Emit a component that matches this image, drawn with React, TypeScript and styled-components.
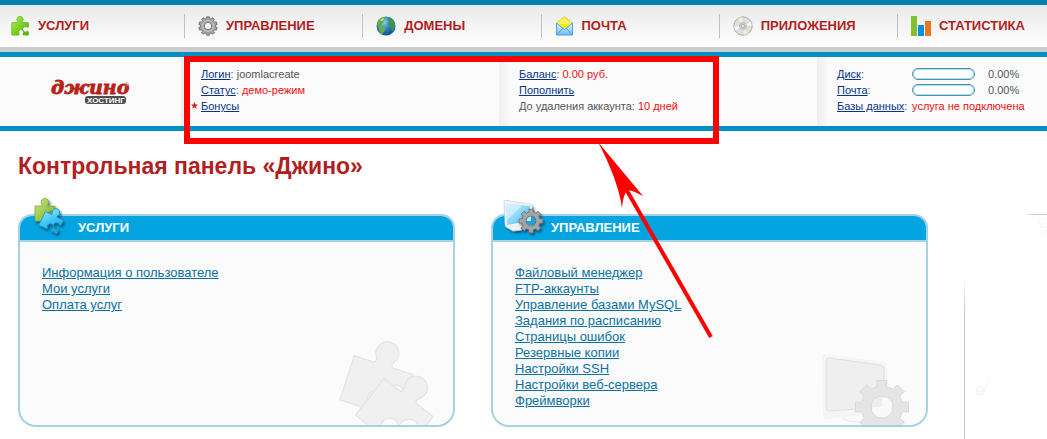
import React from "react";
import styled, { createGlobalStyle } from "styled-components";

const GlobalStyle = createGlobalStyle`
  * { box-sizing: border-box; }
  body {
    margin: 0;
    background: #fff;
    color: #555;
    font-family: "Liberation Sans", Arial, sans-serif;
    font-size: 11px;
    line-height: 16px;
  }
`;

const Page = styled.div`
  position: relative;
  overflow: hidden;
`;

const NavBar = styled.nav`
  display: grid;
  grid-template-columns: 184px repeat(4, 1fr) 150px;
  align-items: center;
  height: 52px;
  border-top: 5px solid #0280ae;
  border-bottom: 5px solid #cbcccf;
  background: linear-gradient(#ebeaeb, #fff);
`;

const NavLink = styled.a<{ $first?: boolean }>`
  display: flex;
  align-items: center;
  gap: 8px;
  height: 24px;
  padding-left: ${(p) => (p.$first ? 11 : 13)}px;
  border-left: ${(p) => (p.$first ? "0" : "1px solid #c0c0c2")};
  color: #b11f22;
  font-family: "Liberation Sans", Arial, sans-serif;
  font-size: 13px;
  font-weight: 700;
  text-decoration: none;
  white-space: nowrap;
`;

const StatusBar = styled.header`
  position: relative;
  z-index: 1;
  display: grid;
  grid-template-columns: 181px 1fr 1fr 230px;
  border-top: 5px solid #0290c4;
  border-bottom: 5px solid #0290c4;
  background: #fbfbfb;
`;

const LogoCell = styled.div`
  display: flex;
  align-items: center;
  padding-left: 48px;
`;

const InfoCell = styled.div`
  padding: 9px 0 12px 20px;
  background: linear-gradient(90deg, #eeeeef, #fbfbfb 12px);
  white-space: nowrap;
`;

const InfoLine = styled.div`
  position: relative;
`;

const InfoLink = styled.a`
  color: #05328c;
  text-decoration: underline;
`;

const Red = styled.span`
  color: #f30d14;
`;

const Star = styled.svg`
  position: absolute;
  left: -10px;
  top: 4px;
`;

const Usage = styled.div`
  display: grid;
  grid-template-columns: 75px 76px auto;
  justify-content: start;
  align-items: center;
`;

const WideValue = styled(Red)`
  grid-column: 2 / 4;
`;

const Meter = styled.div`
  width: 63px;
  height: 12px;
  border: 1px solid #3594b5;
  border-radius: 6px;
  background: #fff;
  box-shadow: inset 0 0 1px 1px #b5d9e6;
`;

const Main = styled.main`
  padding: 21px 0 12px 18px;
`;

const Title = styled.h1`
  margin: 0 0 34px;
  color: #b11f22;
  font-size: 23px;
  line-height: 28px;
`;

const Columns = styled.div`
  display: grid;
  grid-template-columns: 1fr 1fr 83px;
  gap: 36px;
`;

const Panel = styled.section`
  position: relative;
  border: 2px solid #a6d2e4;
  border-radius: 14px 14px 18px 18px;
  background: #fbfbfb;
`;

const PanelTitle = styled.h2`
  margin: 0;
  padding-left: 58px;
  border-bottom: 2px solid #a6d2e4;
  border-radius: 12px 12px 0 0;
  background: #04a4e1;
  color: #fff;
  font-size: 13px;
  font-weight: 700;
  line-height: 24px;
`;

const PanelIcon = styled.svg`
  position: absolute;
  left: 10px;
  top: -20px;
  overflow: visible;
`;

const Watermark = styled.svg`
  position: absolute;
  right: 12px;
  bottom: 0;
`;

const LinkList = styled.ul`
  position: relative;
  margin: 0;
  padding: 23px 22px 16px;
  list-style: none;
  font-size: 13px;
`;

const ListLink = styled.a`
  color: #0a71a2;
  text-decoration: underline;
`;

const Side = styled.aside`
  position: relative;
`;

const SideArt = styled.svg`
  position: absolute;
  left: 0;
  top: 0;
`;

const Highlight = styled.div`
  position: absolute;
  left: 184px;
  right: 328px;
  top: -1px;
  height: 88px;
  border: 6px solid #f00;
`;

const Arrow = styled.svg`
  position: absolute;
  right: 333px;
  top: 84px;
  pointer-events: none;
`;

const PIECE =
  "M1 8h6.500c1-.2.8-1.200.3-2A3.700 3.700 0 1 1 14 6c-.5.8-.7 1.800.3 2H21v5c-.3 1-1.200.9-2 .3a3.200 3.200 0 1 0 0 5.400c.8-.5 1.700-.6 2 .4V23h-6c-1-.3-.8-1.200-.3-2a3 3 0 1 0-5 0c.5.8.6 1.700-.3 2H1z";

function gearPath(cx: number, cy: number, r: number, inner: number, teeth = 8) {
  const pts: string[] = [];
  const step = (Math.PI * 2) / teeth;
  for (let i = 0; i < teeth; i++) {
    const a = i * step - Math.PI / 2;
    [
      [-0.28, inner],
      [-0.24, r],
      [0.24, r],
      [0.28, inner],
    ].forEach(([o, d]) => {
      const t = a + o * step;
      pts.push(`${(cx + d * Math.cos(t)).toFixed(2)} ${(cy + d * Math.sin(t)).toFixed(2)}`);
    });
  }
  return `M${pts.join("L")}Z`;
}

const PieceIcon = () => (
  <svg width="19" height="20" viewBox="0 0 23 24" aria-hidden="true">
    <defs>
      <linearGradient id="green" x1="0" x2="1" y2="1">
        <stop offset="0" stopColor="#b8ee70" />
        <stop offset=".5" stopColor="#7bd322" />
        <stop offset="1" stopColor="#55ad12" />
      </linearGradient>
    </defs>
    <path d={PIECE} fill="url(#green)" stroke="#69b52c" />
  </svg>
);

const GearIcon = () => (
  <svg width="20" height="20" viewBox="0 0 20 20" aria-hidden="true">
    <path d={gearPath(10, 10, 9.3, 7.6, 10)} fill="#a6a6a6" stroke="#737373" strokeLinejoin="round" />
    <circle cx="10" cy="10" r="5.600" fill="none" stroke="#c5c5c5" />
    <circle cx="10" cy="10" r="3.700" fill="#f4f4f4" stroke="#777" />
  </svg>
);

const GlobeIcon = () => (
  <svg width="20" height="20" viewBox="0 0 20 20" aria-hidden="true">
    <defs>
      <radialGradient id="sea" cx=".4" cy=".3" r=".7">
        <stop offset="0" stopColor="#8fd0f2" />
        <stop offset=".5" stopColor="#2f86c8" />
        <stop offset="1" stopColor="#124f92" />
      </radialGradient>
    </defs>
    <circle cx="10" cy="10" r="9.500" fill="url(#sea)" />
    <path d="M1 7C2 4 4 2 7 1l3 .5-1 2-2 .5 1 2-2 1.500-1 2 2 1 2.500 1-.5 3-2 2.500-1 1.500C3 16 3 13 2.500 11z" fill="#64ad48" />
    <path d="M11.500 3l3-1.500C17 3 18.500 5 19 8l-.5 4-1.500 3-1.500-1-.5-3-2.500-1-1-2.500 1.500-1.500z" fill="#3c9352" />
    <path d="M4 4l3-2 1 1-2 2z" fill="#c7e8a5" />
  </svg>
);

const MailIcon = () => (
  <svg width="19" height="20" viewBox="0 0 19 20" aria-hidden="true">
    <defs>
      <linearGradient id="mail" x2="0" y2="1">
        <stop offset="0" stopColor="#eaf8ff" />
        <stop offset="1" stopColor="#68bdf0" />
      </linearGradient>
    </defs>
    <path d="M1.500 7L9.500.8 17.500 7v11.500h-16z" fill="#fff45b" stroke="#dfca25" />
    <path d="M1.500 7l8 6.500 8-6.500v12h-16z" fill="url(#mail)" stroke="#4aa4dc" />
    <path d="M1.500 19l6.500-7M17.500 19L11 12" stroke="#4aa4dc" />
    <path d="M4 8h11l-5.500 4z" fill="#ffe600" />
  </svg>
);

const DiscIcon = () => (
  <svg width="20" height="20" viewBox="0 0 20 20" aria-hidden="true">
    <circle cx="10" cy="10" r="9.200" fill="#dedede" stroke="#aaa" />
    <path d="M10 10L5 2.500l4-1.500zM10 10l5 7.500-4 1.500z" fill="#f2f1c8" />
    <path d="M10 10l8-4.500.8 4zM10 10l-8 4.500-.8-4z" fill="#f8f8f8" />
    <circle cx="10" cy="10" r="3.500" fill="#d0d0d0" stroke="#bbb" />
    <circle cx="10" cy="10" r="1.500" fill="#fff" stroke="#aaa" />
  </svg>
);

const ChartIcon = () => (
  <svg width="20" height="20" viewBox="0 0 20 20" aria-hidden="true">
    <path d="M0 0h6v20H0z" fill="#82c12b" />
    <path d="M7 9h6v11H7z" fill="#0a90df" />
    <path d="M14 5h6v15h-6z" fill="#e8781e" />
  </svg>
);

const Logo = () => (
  <svg width="86" height="34" viewBox="0 0 86 34" role="img" aria-label="джино хостинг">
    <text
      x="3"
      y="19"
      fill="#b82319"
      stroke="#b82319"
      strokeWidth=".8"
      fontFamily="DejaVu Serif, serif"
      fontSize="19"
      fontStyle="italic"
      fontWeight="700"
    >
      джино
    </text>
    <circle cx="79" cy="9" r="1.500" fill="none" stroke="#d38a80" strokeWidth=".7" />
    <rect x="37" y="21" width="41" height="8" rx="3" fill="#4d4f52" />
    <text x="39" y="28" fill="#fff" fontFamily="Liberation Sans, sans-serif" fontSize="8" fontWeight="700">
      ХОСТИНГ
    </text>
  </svg>
);

const PuzzlePanelIcon = () => (
  <PanelIcon width="44" height="44" viewBox="0 0 44 44" aria-hidden="true">
    <defs>
      <linearGradient id="lime" x1="0" x2="1" y2="1">
        <stop offset="0" stopColor="#cde884" />
        <stop offset="1" stopColor="#73ad1e" />
      </linearGradient>
      <linearGradient id="cyan" x1="0" x2="1" y2="1">
        <stop offset="0" stopColor="#a6ecff" />
        <stop offset=".5" stopColor="#3fc8f5" />
        <stop offset="1" stopColor="#1698d8" />
      </linearGradient>
      <filter id="drop" x="-20%" y="-20%" width="150%" height="150%">
        <feDropShadow dx="1.500" dy="2" stdDeviation="1" floodColor="#053b55" floodOpacity=".7" />
      </filter>
    </defs>
    <g filter="url(#drop)">
      <path d={PIECE} transform="translate(4 2)" fill="url(#lime)" stroke="#79a52e" strokeWidth=".7" />
      <path d={PIECE} transform="translate(18 8) rotate(26)" fill="url(#cyan)" stroke="#218fbd" strokeWidth=".7" />
    </g>
  </PanelIcon>
);

const ComputerPanelIcon = () => (
  <PanelIcon width="44" height="44" viewBox="0 0 44 44" aria-hidden="true">
    <defs>
      <linearGradient id="screen" x2="1" y2="1">
        <stop offset="0" stopColor="#c8efff" />
        <stop offset=".5" stopColor="#8ed8f9" />
        <stop offset="1" stopColor="#3caee6" />
      </linearGradient>
    </defs>
    <g filter="url(#drop)">
      <path d="M1 6q0-2 2-1.700L27 8q2 .3 2 2v19l-2 2-10 1 2 2-9 1-7-4q-1-1-1-3z" fill="#f0f3f4" stroke="#c5ced1" strokeWidth=".6" />
      <path d="M3 7l24 3v15L4 29z" fill="url(#screen)" />
      <path d="M3 7l17 2L4 24z" fill="#e1f7ff" opacity=".6" />
    </g>
    <g filter="url(#drop)">
      <path
        fillRule="evenodd"
        d={gearPath(28, 25, 12, 9.2) + "M33 25a5 5 0 1 0-10 0a5 5 0 1 0 10 0"}
        fill="#a3a5a7"
        stroke="#636a6e"
        strokeWidth=".7"
      />
    </g>
    <circle cx="28" cy="25" r="4.500" fill="#2b9ccf" />
    <path d="M28 25v-4.500a4.500 4.500 0 0 0-4.500 4.500z" fill="#b8e9fa" />
  </PanelIcon>
);

const PuzzleWatermark = () => (
  <Watermark width="102" height="84" viewBox="0 0 102 84" aria-hidden="true">
    <g fill="#f0f0f1" stroke="#e4e4e6" strokeWidth=".4">
      <path d={PIECE} transform="translate(20 -10) rotate(18) scale(3.100)" />
      <path d={PIECE} transform="translate(58 16) rotate(38) scale(3.100)" />
    </g>
  </Watermark>
);

const ComputerWatermark = () => (
  <Watermark width="94" height="72" viewBox="0 0 94 72" aria-hidden="true">
    <path d="M2 4q0-4 4-3l57 8q4 1 4 5v46L6 66q-3 0-3-4z" fill="#f5f5f6" />
    <path d="M6 8q0-3 3-3l51 7q4 1 4 4v38L9 58q-3 0-3-3z" fill="#efeff0" stroke="#e1e1e3" />
    <path d="M22 64q3 5 20 5" fill="none" stroke="#e8e8e9" />
    <path
      fillRule="evenodd"
      d={gearPath(62, 54, 27, 21) + "M73 54a11 11 0 1 0-22 0a11 11 0 1 0 22 0"}
      fill="#e5e5e6"
      stroke="#dadadb"
    />
    <circle cx="62" cy="54" r="10" fill="#f9f9f9" />
    <path d="M62 54V44a10 10 0 0 0-10 10z" fill="#eee" />
  </Watermark>
);

const NAV = [
  ["УСЛУГИ", PieceIcon],
  ["УПРАВЛЕНИЕ", GearIcon],
  ["ДОМЕНЫ", GlobeIcon],
  ["ПОЧТА", MailIcon],
  ["ПРИЛОЖЕНИЯ", DiscIcon],
  ["СТАТИСТИКА", ChartIcon],
] as const;

const SERVICES = ["Информация о пользователе", "Мои услуги", "Оплата услуг"];
const MANAGEMENT = [
  "Файловый менеджер",
  "FTP-аккаунты",
  "Управление базами MySQL",
  "Задания по расписанию",
  "Страницы ошибок",
  "Резервные копии",
  "Настройки SSH",
  "Настройки веб-сервера",
  "Фреймворки",
];

const Links = ({ items }: { items: string[] }) => (
  <LinkList>
    {items.map((item) => (
      <li key={item}>
        <ListLink href="#">{item}</ListLink>
      </li>
    ))}
  </LinkList>
);

export default function App() {
  return (
    <Page>
      <GlobalStyle />
      <NavBar>
        {NAV.map(([label, Icon], i) => (
          <NavLink key={label} href="#" $first={i === 0}>
            <Icon />
            {label}
          </NavLink>
        ))}
      </NavBar>
      <StatusBar>
        <LogoCell>
          <Logo />
        </LogoCell>
        <InfoCell>
          <InfoLine>
            <InfoLink href="#">Логин</InfoLink>: joomlacreate
          </InfoLine>
          <InfoLine>
            <InfoLink href="#">Статус</InfoLink>: <Red>демо-режим</Red>
          </InfoLine>
          <InfoLine>
            <Star width="7" height="7" viewBox="0 0 14 14" aria-hidden="true">
              <path d="M7 0l2 5h5l-4 3.500 1.500 5L7 10.500l-4.500 3 1.500-5L0 5h5z" fill="#d62020" />
            </Star>
            <InfoLink href="#">Бонусы</InfoLink>
          </InfoLine>
        </InfoCell>
        <InfoCell>
          <InfoLine>
            <InfoLink href="#">Баланс</InfoLink>: <Red>0.00 руб.</Red>
          </InfoLine>
          <InfoLine>
            <InfoLink href="#">Пополнить</InfoLink>
          </InfoLine>
          <InfoLine>
            До удаления аккаунта: <Red>10 дней</Red>
          </InfoLine>
        </InfoCell>
        <InfoCell>
          <Usage>
            <span>
              <InfoLink href="#">Диск</InfoLink>:
            </span>
            <Meter role="progressbar" aria-label="Диск" aria-valuenow={0} />
            <span>0.00%</span>
            <span>
              <InfoLink href="#">Почта</InfoLink>:
            </span>
            <Meter role="progressbar" aria-label="Почта" aria-valuenow={0} />
            <span>0.00%</span>
            <span>
              <InfoLink href="#">Базы данных</InfoLink>:
            </span>
            <WideValue>услуга не подключена</WideValue>
          </Usage>
        </InfoCell>
        <Highlight />
        <Arrow width="118" height="200" viewBox="596 141 118 200" aria-hidden="true">
          <path d="M626 189L711 337" stroke="#f00" strokeWidth="4" />
          <path d="M598 142L643 196Q632 190 627 190Q623 196 622 208Q618 180 598 142Z" fill="#f00" />
        </Arrow>
      </StatusBar>
      <Main>
        <Title>Контрольная панель «Джино»</Title>
        <Columns>
          <Panel>
            <PanelTitle>УСЛУГИ</PanelTitle>
            <PuzzlePanelIcon />
            <PuzzleWatermark />
            <Links items={SERVICES} />
          </Panel>
          <Panel>
            <PanelTitle>УПРАВЛЕНИЕ</PanelTitle>
            <ComputerPanelIcon />
            <ComputerWatermark />
            <Links items={MANAGEMENT} />
          </Panel>
          <Side>
            <SideArt width="83" height="225" viewBox="0 0 83 225" aria-hidden="true">
              <defs>
                <linearGradient id="fadeDown" x2="0" y2="1">
                  <stop offset="0" stopColor="#ccc" stopOpacity="0" />
                  <stop offset=".2" stopColor="#ccc" />
                </linearGradient>
                <linearGradient id="fadeRight">
                  <stop offset="0" stopColor="#ccc" stopOpacity="0" />
                  <stop offset=".4" stopColor="#ccc" />
                </linearGradient>
              </defs>
              <rect x="0" y="62" width="1" height="163" fill="url(#fadeDown)" />
              <rect x="60" y="0" width="23" height="1" fill="url(#fadeRight)" />
              <path d="M75 5l3 14 5 2M75 5h8M78 9h5M78 13h5M79 17h4" fill="none" stroke="#f6f6f6" />
              <circle cx="16" cy="177" r="4" fill="none" stroke="#f0f0f0" />
              <path d="M19 180l7-17M13 177h6" fill="none" stroke="#f3f3f3" />
            </SideArt>
          </Side>
        </Columns>
      </Main>
    </Page>
  );
}
